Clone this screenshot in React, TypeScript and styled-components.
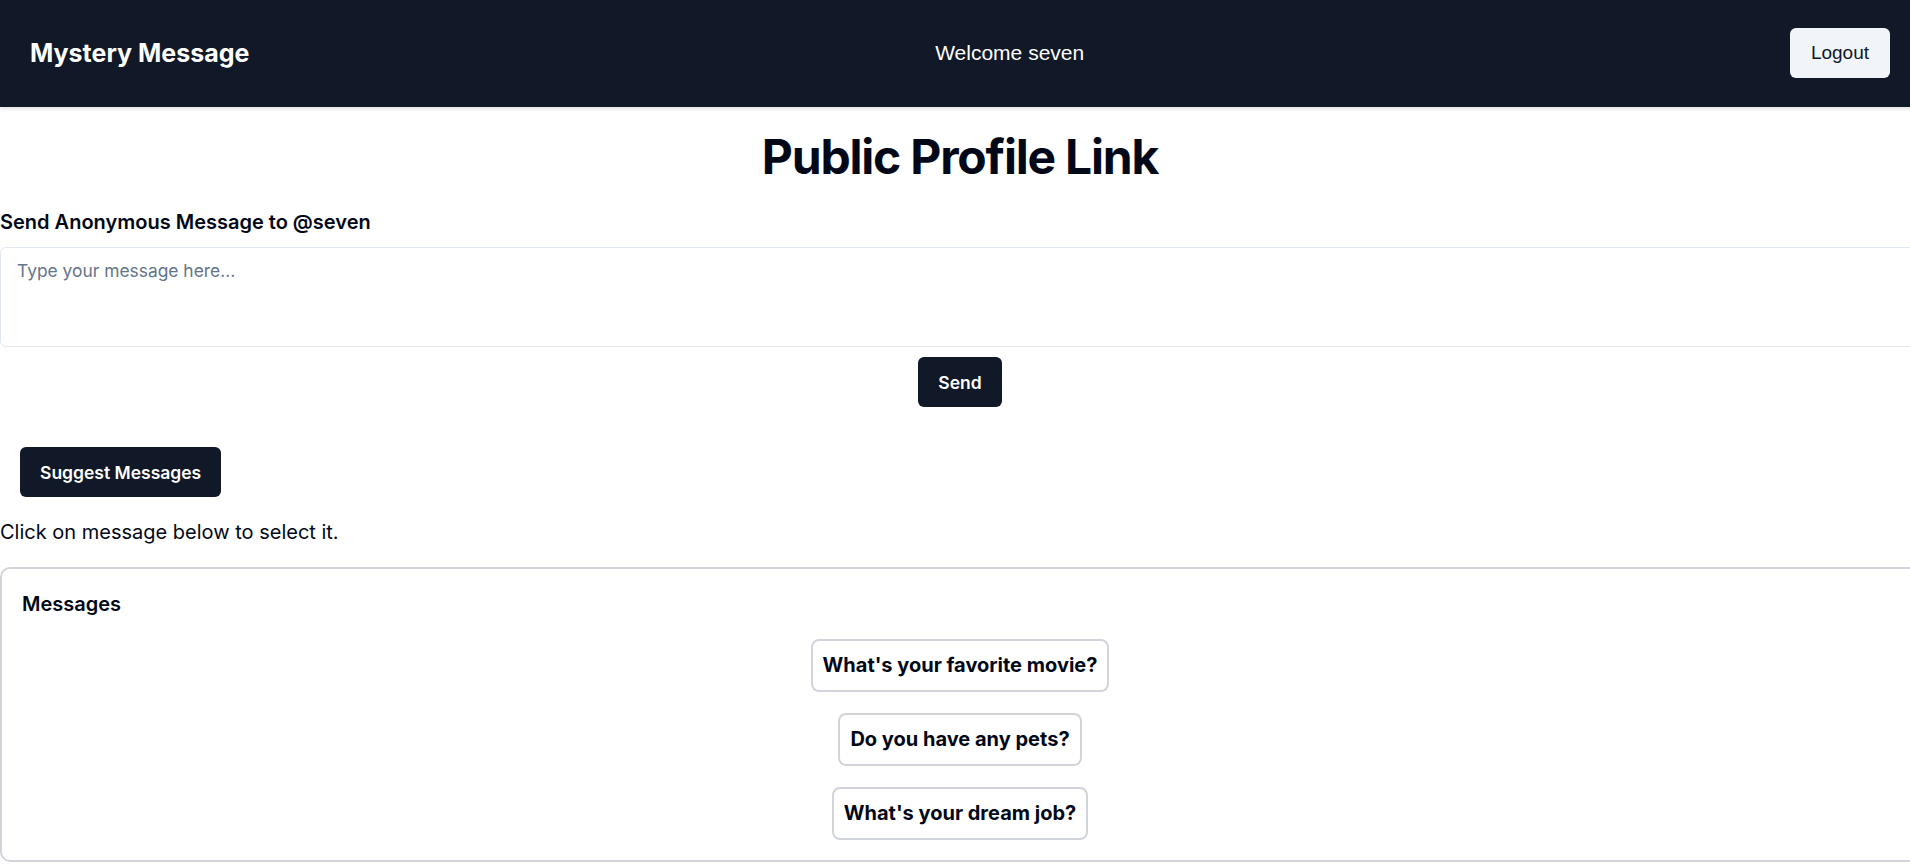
import React from "react";
import styled, { createGlobalStyle } from "styled-components";

const GlobalStyle = createGlobalStyle`
  html, body {
    margin: 0;
    padding: 0;
    background: #ffffff;
    overflow-x: hidden;
  }
  body {
    font-family: Inter, "Noto Sans", sans-serif;
    color: #020817;
  }
  #root {
    width: 1920px;
  }
  * { box-sizing: border-box; }
`;

const Nav = styled.nav`
  height: 107px;
  background: #111827;
  padding: 0 30px;
  display: flex;
  align-items: center;
  justify-content: space-between;
  box-shadow: 0 2px 4px rgba(0, 0, 0, 0.12);
  position: relative;
`;

const Brand = styled.a`
  font-family: Inter, sans-serif;
  font-weight: 700;
  font-size: 25px;
  color: #ffffff;
  text-decoration: none;
  margin-top: -2px;
`;

const Welcome = styled.span`
  font-family: "Liberation Sans", Arial, sans-serif;
  font-size: 21px;
  color: #ffffff;
  margin-left: -20px;
  margin-top: -2px;
`;

const LogoutButton = styled.button`
  width: 100px;
  height: 50px;
  border: none;
  border-radius: 6px;
  background: #f1f5f9;
  color: #0f172a;
  font-family: "Liberation Sans", Arial, sans-serif;
  font-size: 19px;
  cursor: pointer;
  margin-top: -2px;
`;

const Main = styled.main`
  width: 1920px;
  display: flex;
  flex-direction: column;
`;

const Title = styled.h1`
  margin: 26px 0 27px;
  text-align: center;
  font-size: 48px;
  line-height: 48px;
  font-weight: 700;
  letter-spacing: -0.025em;
  color: #020817;
`;

const Label = styled.label`
  font-size: 20px;
  line-height: 28px;
  font-weight: 600;
  color: #020817;
  margin-bottom: 11px;
`;

const MessageInput = styled.textarea`
  width: 100%;
  height: 100px;
  border: 1px solid #e2e8f0;
  border-radius: 6px;
  padding: 11px 16px 10px;
  font-family: Inter, sans-serif;
  font-size: 17.4px;
  line-height: 24px;
  color: #020817;
  resize: vertical;
  outline: none;
  &::placeholder {
    color: #64748b;
  }
`;

const SendRow = styled.div`
  display: flex;
  justify-content: center;
  margin-top: 10px;
`;

const DarkButton = styled.button`
  height: 50px;
  padding: 0 20px;
  border: none;
  border-radius: 6px;
  background: #111827;
  color: #ffffff;
  font-family: Inter, sans-serif;
  font-size: 17.5px;
  font-weight: 600;
  cursor: pointer;
`;

const SuggestSection = styled.section`
  display: flex;
  flex-direction: column;
  align-items: flex-start;
  margin-top: 40px;
`;

const SuggestButton = styled(DarkButton)`
  margin-left: 20px;
`;

const Hint = styled.p`
  margin: 21px 0 21px;
  font-size: 20px;
  line-height: 28px;
  color: #020817;
`;

const Card = styled.div`
  width: 100%;
  border: 2px solid #d1d5db;
  border-radius: 10px;
  padding: 21px 20px 20px;
  display: flex;
  flex-direction: column;
`;

const CardTitle = styled.h3`
  margin: 0 0 21px;
  font-size: 20px;
  line-height: 28px;
  font-weight: 600;
  color: #020817;
`;

const SuggestionList = styled.div`
  display: flex;
  flex-direction: column;
  align-items: center;
  gap: 21px;
`;

const SuggestionButton = styled.button`
  padding: 10px 10px;
  border: 2px solid #d1d5db;
  border-radius: 8px;
  background: #ffffff;
  color: #020817;
  font-family: Inter, sans-serif;
  font-size: 20px;
  line-height: 29px;
  height: 53px;
  font-weight: 700;
  cursor: pointer;
`;

const suggestions = [
  "What's your favorite movie?",
  "Do you have any pets?",
  "What's your dream job?",
];

export default function App() {
  return (
    <>
      <GlobalStyle />
      <Nav>
        <Brand href="#">Mystery Message</Brand>
        <Welcome>Welcome seven</Welcome>
        <LogoutButton>Logout</LogoutButton>
      </Nav>
      <Main>
        <Title>Public Profile Link</Title>
        <Label htmlFor="msg">Send Anonymous Message to @seven</Label>
        <MessageInput id="msg" placeholder="Type your message here..." />
        <SendRow>
          <DarkButton>Send</DarkButton>
        </SendRow>
        <SuggestSection>
          <SuggestButton>Suggest Messages</SuggestButton>
          <Hint>Click on message below to select it.</Hint>
          <Card>
            <CardTitle>Messages</CardTitle>
            <SuggestionList>
              {suggestions.map((s) => (
                <SuggestionButton key={s}>{s}</SuggestionButton>
              ))}
            </SuggestionList>
          </Card>
        </SuggestSection>
      </Main>
    </>
  );
}
